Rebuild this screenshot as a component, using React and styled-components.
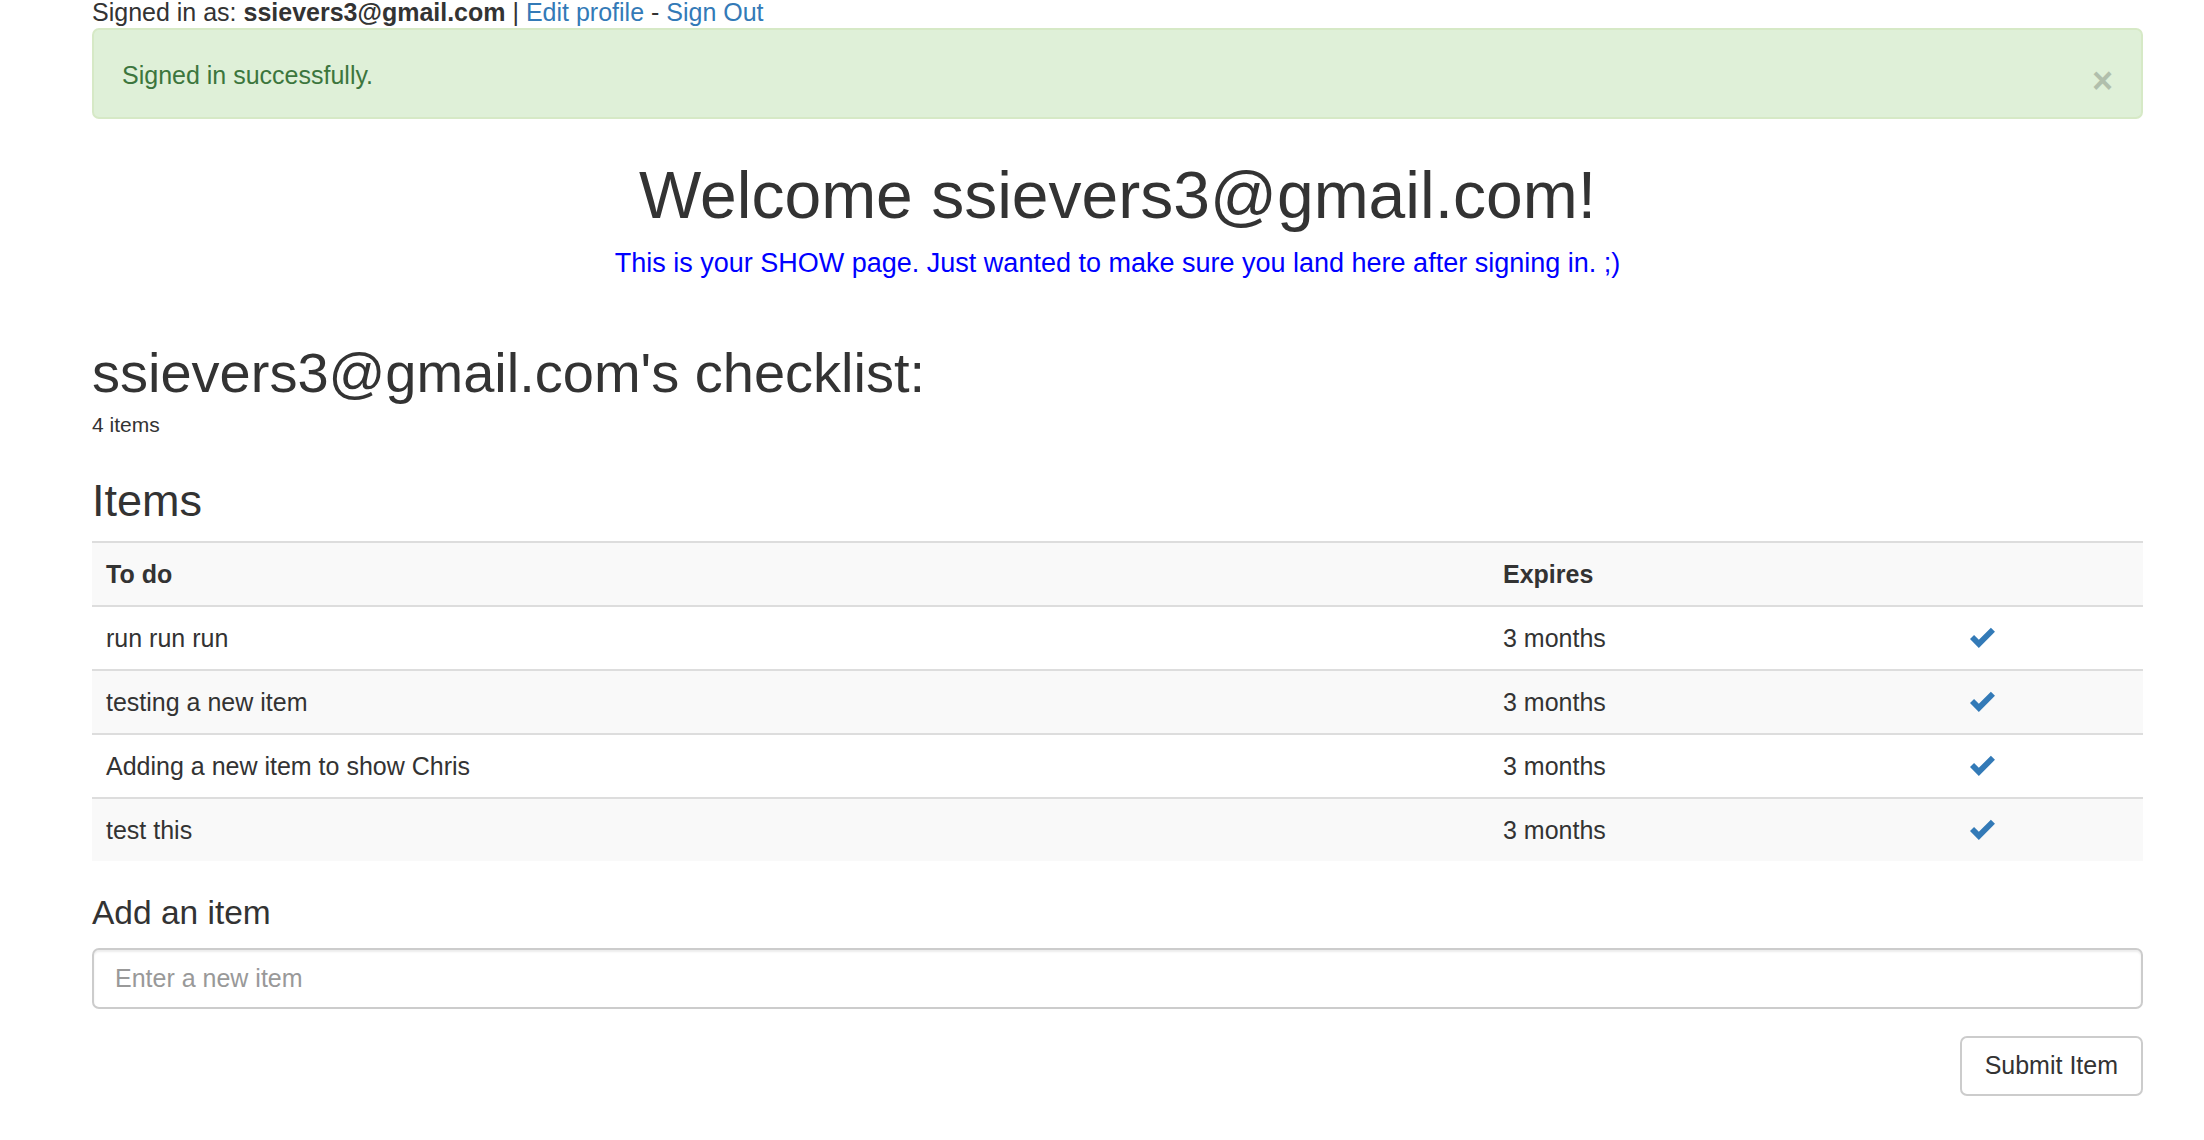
import React from 'react';
import styled, { createGlobalStyle } from 'styled-components';

const GlobalStyle = createGlobalStyle`
  html, body {
    margin: 0;
    padding: 0;
    background: #fff;
  }
  body {
    font-family: 'Liberation Sans', Arial, Helvetica, sans-serif;
    font-size: 25px;
    line-height: 34px;
    color: #333;
  }
  * {
    box-sizing: border-box;
  }
`;

const items = [
  { id: 1, title: 'run run run', expires: '3 months' },
  { id: 2, title: 'testing a new item', expires: '3 months' },
  { id: 3, title: 'Adding a new item to show Chris', expires: '3 months' },
  { id: 4, title: 'test this', expires: '3 months' },
];

const CheckIcon = () => (
  <svg width='26' height='23' viewBox='0 0 25 22' aria-hidden='true'>
    <polygon
      points='0,12.5 3.9,8.6 8.5,13.2 20.1,1.6 24,5.5 8.5,21'
      fill='#337ab7'
    />
  </svg>
);

const App = () => {
  const email = 'ssievers3@gmail.com';
  return (
    <Page>
      <GlobalStyle />
      <TopBar>
        Signed in as: <strong>{email}</strong> | <NavLink href='#'>Edit profile</NavLink> -{' '}
        <NavLink href='#'>Sign Out</NavLink>
      </TopBar>

      <Alert role='alert'>
        <span>Signed in successfully.</span>
        <Close type='button' aria-label='Close'>
          ×
        </Close>
      </Alert>

      <Welcome>
        <h1>Welcome {email}!</h1>
        <p>This is your SHOW page. Just wanted to make sure you land here after signing in. ;)</p>
      </Welcome>

      <ListTitle>{email}'s checklist:</ListTitle>
      <Count>{items.length} items</Count>

      <SectionTitle>Items</SectionTitle>
      <Table>
        <colgroup>
          <Col $width='1397px' />
          <Col $width='469px' />
          <Col />
        </colgroup>
        <tbody>
          <Row $striped>
            <Head>To do</Head>
            <Head>Expires</Head>
            <Head />
          </Row>
          {items.map((item, i) => (
            <Row key={item.id} $striped={i % 2 === 1}>
              <Cell>{item.title}</Cell>
              <Cell>{item.expires}</Cell>
              <Cell>
                <CheckIcon />
              </Cell>
            </Row>
          ))}
        </tbody>
      </Table>

      <FormTitle>Add an item</FormTitle>
      <form onSubmit={(e) => e.preventDefault()}>
        <Input type='text' placeholder='Enter a new item' />
        <Actions>
          <Button type='submit'>Submit Item</Button>
        </Actions>
      </form>
    </Page>
  );
};

export default App;

const Page = styled.div`
  padding: 0 61px 40px 92px;
`;

const TopBar = styled.div`
  height: 24px;
  line-height: 24px;
  white-space: nowrap;

  strong {
    font-weight: 700;
  }
`;

const NavLink = styled.a`
  color: #337ab7;
  text-decoration: none;
`;

const Alert = styled.div`
  margin-top: 4px;
  height: 91px;
  padding: 2px 28px 0;
  display: flex;
  align-items: center;
  justify-content: space-between;
  background-color: #dff0d8;
  border: 2px solid #d6e9c6;
  border-radius: 7px;
  color: #3c763d;
`;

const Close = styled.button`
  margin-top: 12px;
  padding: 0;
  border: 0;
  background: transparent;
  font-family: 'Liberation Sans', Arial, sans-serif;
  font-size: 36px;
  font-weight: 700;
  line-height: 1;
  color: #000;
  opacity: 0.2;
  cursor: pointer;
`;

const Welcome = styled.div`
  margin-top: 40px;
  text-align: center;

  h1 {
    margin: 0;
    font-size: 66px;
    font-weight: 500;
    line-height: 1.1;
  }
  p {
    margin: 14px 0 0;
    font-size: 27px;
    color: #0000ff;
  }
`;

const ListTitle = styled.h2`
  margin: 62px 0 0;
  font-size: 56px;
  font-weight: 500;
  line-height: 1.1;
`;

const Count = styled.div`
  margin-top: 7px;
  font-size: 21px;
  line-height: 30px;
`;

const SectionTitle = styled.h3`
  margin: 36px 0 0;
  font-size: 45px;
  font-weight: 500;
  line-height: 1.1;
`;

const Table = styled.table`
  margin-top: 15px;
  width: 100%;
  border-collapse: collapse;
  border-spacing: 0;
  table-layout: fixed;
`;

const Col = styled.col`
  width: ${({ $width }) => $width || 'auto'};
`;

const Row = styled.tr`
  background-color: ${({ $striped }) => ($striped ? '#f9f9f9' : '#fff')};
`;

const Cell = styled.td`
  padding: 14px 14px;
  border-top: 2px solid #ddd;
  line-height: 34px;
  vertical-align: middle;
  text-align: left;

  svg {
    display: block;
    margin-left: -2px;
  }
`;

const Head = styled(Cell).attrs({ as: 'th' })`
  font-weight: 700;
`;

const FormTitle = styled.h4`
  margin: 34px 0 0;
  font-size: 33.5px;
  font-weight: 500;
  line-height: 1.1;
`;

const Input = styled.input`
  display: block;
  width: 100%;
  height: 61px;
  margin-top: 16px;
  padding: 0 21px;
  font-family: inherit;
  font-size: 25px;
  color: #555;
  background: #fff;
  border: 2px solid #ccc;
  border-radius: 7px;
  box-shadow: inset 0 2px 2px rgba(0, 0, 0, 0.075);
  outline: none;

  &::placeholder {
    color: #999;
    opacity: 1;
  }
`;

const Actions = styled.div`
  display: flex;
  justify-content: flex-end;
  margin-top: 27px;
`;

const Button = styled.button`
  height: 60px;
  padding: 0 23px;
  font-family: inherit;
  font-size: 25px;
  color: #333;
  background: #fff;
  border: 2px solid #ccc;
  border-radius: 7px;
  cursor: pointer;
`;
